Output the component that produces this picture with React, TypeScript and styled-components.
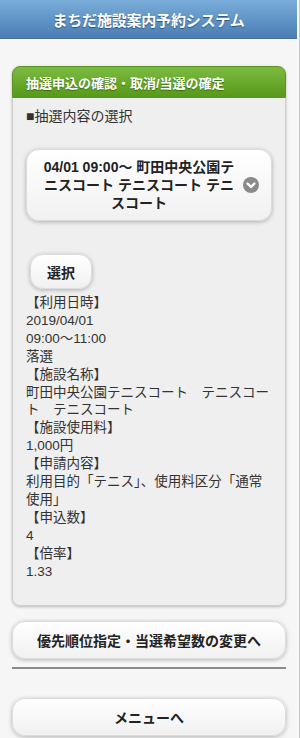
import React from "react";
import styled, { createGlobalStyle } from "styled-components";

const GlobalStyle = createGlobalStyle`
  html, body {
    margin: 0;
    padding: 0;
    background: #f6f6f6;
  }
  body {
    font-family: "Liberation Sans", "Noto Sans CJK JP", sans-serif;
    color: #333;
  }
`;

const details: string[] = [
  "【利用日時】",
  "2019/04/01",
  "09:00～11:00",
  "落選",
  "【施設名称】",
  "町田中央公園テニスコート　テニスコー",
  "ト　テニスコート",
  "【施設使用料】",
  "1,000円",
  "【申請内容】",
  "利用目的「テニス」、使用料区分「通常",
  "使用」",
  "【申込数】",
  "4",
  "【倍率】",
  "1.33",
];

const App = () => {
  return (
    <>
      <GlobalStyle />
      <Frame>
        <Page>
          <Header>
            <Title>まちだ施設案内予約システム</Title>
          </Header>
          <Content>
            <Card>
              <CardHead>抽選申込の確認・取消/当選の確定</CardHead>
              <CardBody>
                <Label>■抽選内容の選択</Label>
                <SelectButton>
                  <SelectText>
                    04/01 09:00～ 町田中央公園テ
                    <br />
                    ニスコート テニスコート テニ
                    <br />
                    スコート
                  </SelectText>
                  <ChevronIcon>
                    <svg width="16" height="16" viewBox="0 0 16 16">
                      <circle cx="8" cy="8" r="8" fill="#8a8a8a" />
                      <path
                        d="M4.6 6.6 L8 9.9 L11.4 6.6"
                        fill="none"
                        stroke="#fff"
                        strokeWidth="2.4"
                        strokeLinecap="round"
                        strokeLinejoin="round"
                      />
                    </svg>
                  </ChevronIcon>
                </SelectButton>
                <SmallButton>選択</SmallButton>
                <Details>
                  {details.map((line, i) => (
                    <div key={i}>{line}</div>
                  ))}
                </Details>
              </CardBody>
            </Card>
            <WideButton>優先順位指定・当選希望数の変更へ</WideButton>
            <Divider />
            <WideButton $top={29}>メニューへ</WideButton>
          </Content>
        </Page>
      </Frame>
    </>
  );
};

export default App;

const Frame = styled.div`
  width: 299px;
  min-height: 738px;
  border-right: 1px solid #c4c4c4;
  background: #fafafa;
`;

const Page = styled.div`
  width: 297px;
  min-height: 738px;
  background: #f6f6f6;
`;

const Header = styled.header`
  height: 38px;
  background: linear-gradient(#79add9, #4a7db3);
  border-bottom: 1px solid #46709c;
  display: flex;
  align-items: center;
  justify-content: center;
`;

const Title = styled.h1`
  margin: 0;
  font-size: 15px;
  font-weight: bold;
  color: #fff;
  text-shadow: 0 1px 1px #2f5379;
  letter-spacing: -0.2px;
`;

const Content = styled.main`
  padding: 27px 11px 0 12px;
`;

const Card = styled.section`
  border-radius: 8px;
  box-shadow: 0 1px 3px rgba(0, 0, 0, 0.25);
`;

const CardHead = styled.div`
  height: 32px;
  padding-left: 13px;
  display: flex;
  align-items: center;
  background: linear-gradient(#7cbb41, #57991a);
  border: 1px solid #5a9422;
  border-radius: 8px 8px 0 0;
  color: #fff;
  font-size: 13px;
  font-weight: bold;
  text-shadow: 0 1px 1px #3a6a10;
  box-sizing: border-box;
`;

const CardBody = styled.div`
  background: #efefef;
  border: 1px solid #cdcdcd;
  border-top: none;
  border-radius: 0 0 8px 8px;
  padding: 9px 13px 24px 13px;
`;

const Label = styled.div`
  font-size: 14px;
  line-height: 18px;
`;

const SelectButton = styled.div`
  margin-top: 24px;
  position: relative;
  display: flex;
  align-items: center;
  justify-content: center;
  min-height: 71px;
  box-sizing: border-box;
  padding: 8px 40px 8px 20px;
  background: linear-gradient(#ffffff, #f1f1f1);
  border: 1px solid #dcdcdc;
  border-radius: 13px;
  box-shadow: 0 1px 4px rgba(0, 0, 0, 0.28);
`;

const SelectText = styled.div`
  font-size: 14px;
  font-weight: bold;
  line-height: 18px;
  color: #222;
  text-align: center;
  white-space: nowrap;
`;

const ChevronIcon = styled.span`
  position: absolute;
  right: 12px;
  top: 50%;
  margin-top: -8px;
  display: flex;
`;

const SmallButton = styled.div`
  margin: 33px 0 0 4px;
  width: 62px;
  height: 35px;
  box-sizing: border-box;
  display: flex;
  align-items: center;
  justify-content: center;
  font-size: 14px;
  font-weight: bold;
  color: #222;
  background: linear-gradient(#ffffff, #f1f1f1);
  border: 1px solid #dcdcdc;
  border-radius: 13px;
  box-shadow: 0 1px 4px rgba(0, 0, 0, 0.28);
`;

const Details = styled.div`
  margin-top: 5px;
  font-size: 13.5px;
  line-height: 17.9px;
  color: #333;
  white-space: nowrap;
`;

const WideButton = styled.div<{ $top?: number }>`
  margin-top: ${({ $top }) => ($top ?? 15)}px;
  height: 38px;
  box-sizing: border-box;
  display: flex;
  align-items: center;
  justify-content: center;
  font-size: 14px;
  font-weight: bold;
  color: #222;
  background: linear-gradient(#ffffff, #f1f1f1);
  border: 1px solid #dcdcdc;
  border-radius: 13px;
  box-shadow: 0 1px 4px rgba(0, 0, 0, 0.28);
`;

const Divider = styled.hr`
  margin: 8px 0 0 0;
  border: none;
  border-top: 2px solid #8a8a8a;
`;
